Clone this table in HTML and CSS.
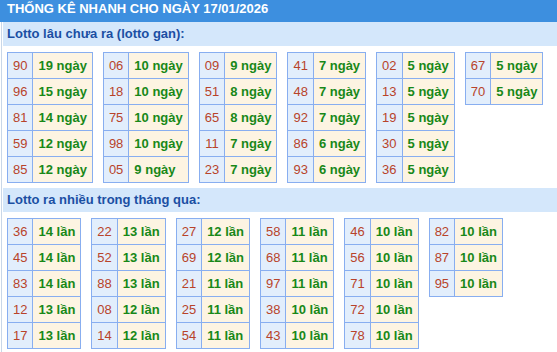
FILE: index.html
```html
<!DOCTYPE html>
<html lang="vi">
<head>
<meta charset="utf-8">
<title>Thống kê nhanh</title>
<link rel="stylesheet" href="styles.css">
</head>
<body>
<div class="title">THỐNG KÊ NHANH CHO NGÀY 17/01/2026</div>
<div class="box">
  <div class="sub">Lotto lâu chưa ra (lotto gan):</div>
  <div class="tables">
    <table><tr><td class="n">90</td><td class="v">19 ngày</td></tr><tr><td class="n">96</td><td class="v">15 ngày</td></tr><tr><td class="n">81</td><td class="v">14 ngày</td></tr><tr><td class="n">59</td><td class="v">12 ngày</td></tr><tr><td class="n">85</td><td class="v">12 ngày</td></tr></table>
    <table><tr><td class="n">06</td><td class="v">10 ngày</td></tr><tr><td class="n">18</td><td class="v">10 ngày</td></tr><tr><td class="n">75</td><td class="v">10 ngày</td></tr><tr><td class="n">98</td><td class="v">10 ngày</td></tr><tr><td class="n">05</td><td class="v">9 ngày</td></tr></table>
    <table><tr><td class="n">09</td><td class="v">9 ngày</td></tr><tr><td class="n">51</td><td class="v">8 ngày</td></tr><tr><td class="n">65</td><td class="v">8 ngày</td></tr><tr><td class="n">11</td><td class="v">7 ngày</td></tr><tr><td class="n">23</td><td class="v">7 ngày</td></tr></table>
    <table><tr><td class="n">41</td><td class="v">7 ngày</td></tr><tr><td class="n">48</td><td class="v">7 ngày</td></tr><tr><td class="n">92</td><td class="v">7 ngày</td></tr><tr><td class="n">86</td><td class="v">6 ngày</td></tr><tr><td class="n">93</td><td class="v">6 ngày</td></tr></table>
    <table><tr><td class="n">02</td><td class="v">5 ngày</td></tr><tr><td class="n">13</td><td class="v">5 ngày</td></tr><tr><td class="n">19</td><td class="v">5 ngày</td></tr><tr><td class="n">30</td><td class="v">5 ngày</td></tr><tr><td class="n">36</td><td class="v">5 ngày</td></tr></table>
    <table><tr><td class="n">67</td><td class="v">5 ngày</td></tr><tr><td class="n">70</td><td class="v">5 ngày</td></tr></table>
  </div>
  <div class="sub">Lotto ra nhiều trong tháng qua:</div>
  <div class="tables">
    <table><tr><td class="n">36</td><td class="v">14 lần</td></tr><tr><td class="n">45</td><td class="v">14 lần</td></tr><tr><td class="n">83</td><td class="v">14 lần</td></tr><tr><td class="n">12</td><td class="v">13 lần</td></tr><tr><td class="n">17</td><td class="v">13 lần</td></tr></table>
    <table><tr><td class="n">22</td><td class="v">13 lần</td></tr><tr><td class="n">52</td><td class="v">13 lần</td></tr><tr><td class="n">88</td><td class="v">13 lần</td></tr><tr><td class="n">08</td><td class="v">12 lần</td></tr><tr><td class="n">14</td><td class="v">12 lần</td></tr></table>
    <table><tr><td class="n">27</td><td class="v">12 lần</td></tr><tr><td class="n">69</td><td class="v">12 lần</td></tr><tr><td class="n">21</td><td class="v">11 lần</td></tr><tr><td class="n">25</td><td class="v">11 lần</td></tr><tr><td class="n">54</td><td class="v">11 lần</td></tr></table>
    <table><tr><td class="n">58</td><td class="v">11 lần</td></tr><tr><td class="n">68</td><td class="v">11 lần</td></tr><tr><td class="n">97</td><td class="v">11 lần</td></tr><tr><td class="n">38</td><td class="v">10 lần</td></tr><tr><td class="n">43</td><td class="v">10 lần</td></tr></table>
    <table><tr><td class="n">46</td><td class="v">10 lần</td></tr><tr><td class="n">56</td><td class="v">10 lần</td></tr><tr><td class="n">71</td><td class="v">10 lần</td></tr><tr><td class="n">72</td><td class="v">10 lần</td></tr><tr><td class="n">78</td><td class="v">10 lần</td></tr></table>
    <table><tr><td class="n">82</td><td class="v">10 lần</td></tr><tr><td class="n">87</td><td class="v">10 lần</td></tr><tr><td class="n">95</td><td class="v">10 lần</td></tr></table>
  </div>
</div>
</body>
</html>
```

FILE: styles.css
```css
html, body {
  margin: 0;
  padding: 0;
  background: #ffffff;
  font-family: "Liberation Sans", Arial, sans-serif;
  font-size: 13px;
  overflow: hidden;
}

.title {
  background: #3d8fdf;
  color: #ffffff;
  font-weight: bold;
  height: 18px;
  line-height: 18px;
  padding: 0 0 4px 7px;
  white-space: nowrap;
}

.box {
  margin-left: 1px;
  padding-left: 1px;
  border-left: 1px solid #c9d7e8;
}

.sub {
  background: #d4e7fb;
  color: #1b4fa3;
  font-weight: bold;
  height: 24px;
  line-height: 24px;
  padding-left: 4px;
  white-space: nowrap;
}

.tables {
  display: flex;
  flex-wrap: wrap;
  align-items: flex-start;
  column-gap: 10px;
  padding: 6px 0 5px 4px;
}

table {
  border-collapse: collapse;
}

td {
  border: 1px solid #88aef0;
  line-height: 25px;
  padding: 0 5px;
  white-space: nowrap;
}

td.n {
  background: #e2eefc;
  color: #b8432a;
  text-align: center;
}

td.v {
  background: #fdf4e2;
  color: #188818;
  font-weight: bold;
}
```
